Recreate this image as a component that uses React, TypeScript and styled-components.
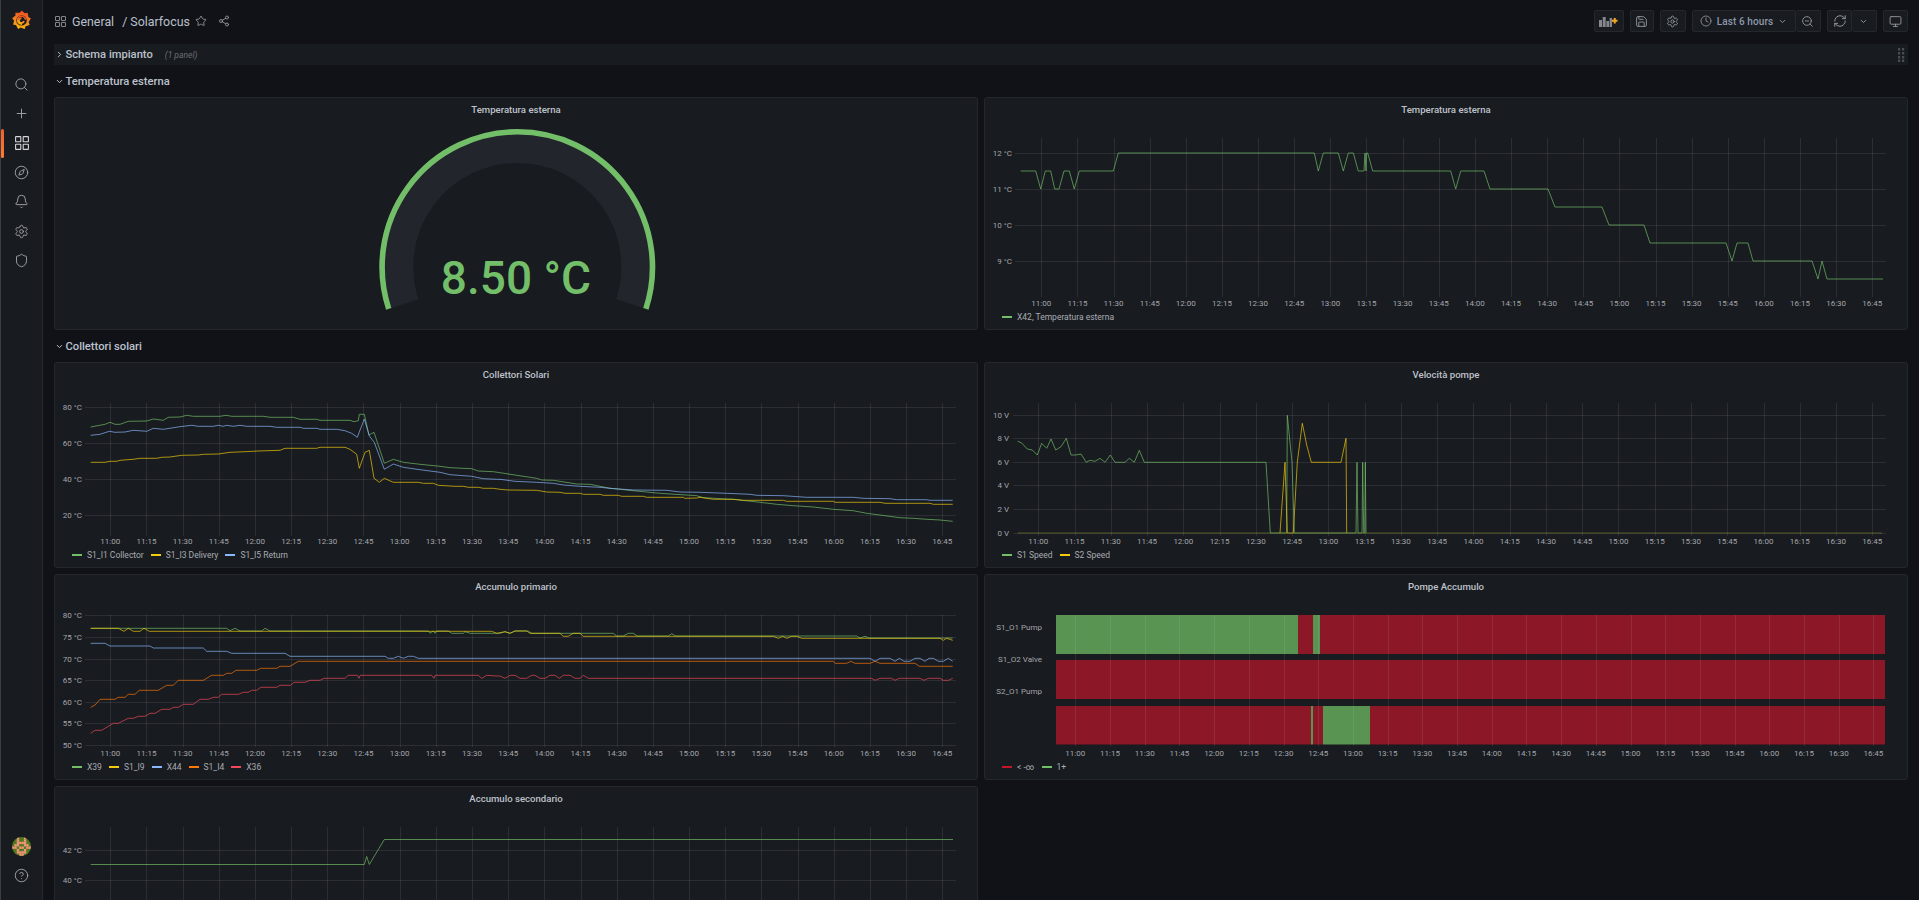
import React from "react";
import styled, { createGlobalStyle } from "styled-components";
import {
  Search,
  Plus,
  Compass,
  Bell,
  Settings,
  Shield,
  CircleHelp,
  Star,
  Share2,
  Save,
  Clock,
  ZoomOut,
  RefreshCw,
  Monitor,
  ChevronDown,
  ChevronRight,
} from "lucide-react";

const GREEN = "#73bf69";
const YELLOW = "#f2cc0c";
const BLUE = "#8ab8ff";
const ORANGE = "#ff780a";
const RED = "#f2495c";

const times = Array.from({ length: 24 }, (_, i) => {
  const m = 660 + i * 15;
  return `${Math.floor(m / 60)}:${String(m % 60).padStart(2, "0")}`;
});

// points are read off 3x crops, so they come in as crop pixels
const crop = (ox: number, oy: number, pts: number[]) => {
  const out: string[] = [];
  for (let i = 0; i < pts.length; i += 2) {
    out.push(`${(ox + pts[i] / 3).toFixed(1)},${(oy + pts[i + 1] / 3).toFixed(1)}`);
  }
  return out.join(" ");
};

interface Series {
  color: string;
  points: string;
}

interface ChartProps {
  left: number;
  top: number;
  width: number;
  height: number;
  tickStart: number;
  tickStep: number;
  tickTop: number;
  tickBottom: number;
  gridLeft: number;
  gridRight: number;
  yLabelX: number;
  xLabelY?: number;
  yTicks: [number, string][];
  series?: Series[];
  children?: React.ReactNode;
}

const GridLine = styled.line`
  stroke: rgba(204, 204, 220, 0.115);
  stroke-width: 1;
`;

const AxisText = styled.text`
  fill: #a4a6ac;
  font-size: 8px;
  font-family: Roboto, sans-serif;
`;

const PlotLine = styled.polyline`
  fill: none;
  stroke-width: 1;
  stroke-linejoin: round;
  opacity: 0.68;
`;

const ChartSvg = styled.svg`
  display: block;
  flex: 1;
  min-height: 0;
  width: 100%;
`;

const Chart = (p: ChartProps) => {
  const xs = times.map((_, i) => p.tickStart + i * p.tickStep);
  const { xLabelY } = p;
  return (
    <ChartSvg viewBox={`${p.left} ${p.top} ${p.width} ${p.height}`} preserveAspectRatio="xMinYMin">
      {p.children}
      {xs.map((x, i) => (
        <GridLine key={i} x1={Math.round(x) + 0.5} x2={Math.round(x) + 0.5} y1={p.tickTop} y2={p.tickBottom} />
      ))}
      {p.yTicks.map(([y, label]) => (
        <React.Fragment key={label}>
          <GridLine x1={p.gridLeft} x2={p.gridRight} y1={Math.round(y) + 0.5} y2={Math.round(y) + 0.5} />
          <AxisText x={p.yLabelX} y={y + 3} textAnchor="end">
            {label}
          </AxisText>
        </React.Fragment>
      ))}
      {xLabelY !== undefined &&
        xs.map((x, i) => (
          <AxisText key={i} x={x} y={xLabelY + 3} textAnchor="middle">
            {times[i]}
          </AxisText>
        ))}
      {p.series?.map((s, i) => <PlotLine key={i} stroke={s.color} points={s.points} />)}
    </ChartSvg>
  );
};

/* series */

const h = (v: number) => 153 + (12 - v) * 36;
const outsideTemp: Series = {
  color: GREEN,
  points:
    crop(980, 90, [
      122, 243, 167, 243, 182, 297, 196, 243, 212, 243, 224, 297, 237, 297, 252, 243, 268, 243, 283, 297, 298, 243,
      400, 243, 415, 189, 1003, 189, 1015, 243, 1030, 189, 1075, 189, 1090, 243, 1105, 189, 1120, 189, 1135, 243, 1152,
      243, 1155, 189, 1158, 243, 1160, 189, 1163, 189, 1178, 243, 1412, 243, 1427, 297, 1442, 243,
    ]) +
    " " +
    [
      [1484, 11.5],
      [1490, 11],
      [1548, 11],
      [1555, 10.5],
      [1602, 10.5],
      [1609, 10],
      [1644, 10],
      [1650, 9.5],
      [1726, 9.5],
      [1732, 9],
      [1737, 9.5],
      [1748, 9.5],
      [1753, 9],
      [1812, 9],
      [1818, 8.5],
      [1822, 9],
      [1827, 8.5],
      [1883, 8.5],
    ]
      .map(([x, v]) => `${x},${h(v)}`)
      .join(" "),
};

const collectors: Series[] = [
  {
    color: GREEN,
    points:
      crop(50, 355, [
        122, 216, 165, 208, 180, 202, 195, 208, 210, 208, 235, 199, 290, 198, 310, 192, 340, 196, 355, 187, 390, 186,
        410, 181, 430, 184, 510, 184, 528, 181, 545, 184, 640, 184, 660, 187, 730, 187, 750, 193, 800, 193, 810, 196,
        900, 196, 912, 200, 925, 197, 928, 178, 943, 178, 957, 240, 972, 232, 1003, 325, 1030, 313, 1060, 322, 1110,
        328, 1170, 334, 1200, 338, 1265, 341, 1285, 348, 1330, 350,
      ]) +
      " " +
      crop(500, 355, [
        0, 353, 50, 361, 110, 370, 125, 375, 160, 376, 230, 387, 270, 388, 330, 400, 430, 410, 480, 415, 590, 422, 610,
        428, 700, 433, 780, 442, 830, 448, 880, 452, 940, 456, 1000, 463, 1060, 467, 1100, 475, 1200, 488, 1240, 490,
        1280, 493, 1320, 495, 1358, 499,
      ]),
  },
  {
    color: YELLOW,
    points:
      crop(50, 355, [
        122, 322, 165, 322, 180, 319, 200, 319, 210, 316, 250, 313, 270, 310, 320, 310, 335, 307, 360, 306, 395, 301,
        445, 300, 460, 298, 505, 297, 540, 292, 585, 290, 625, 288, 690, 286, 705, 280, 800, 280, 810, 277, 885, 277,
        900, 283, 920, 298, 928, 340, 945, 292, 958, 286, 972, 370, 988, 382, 1003, 370, 1030, 382, 1105, 382, 1120,
        385, 1150, 385, 1165, 391, 1215, 394, 1240, 394, 1255, 397, 1285, 397, 1300, 400, 1330, 400,
      ]) +
      " " +
      crop(500, 355, [
        0, 403, 25, 405, 110, 406, 140, 411, 180, 412, 195, 415, 240, 415, 250, 418, 300, 418, 310, 421, 355, 421, 365,
        424, 430, 424, 440, 427, 550, 427, 555, 430, 590, 429, 600, 427, 640, 433, 700, 433, 730, 436, 850, 436, 860,
        439, 1000, 439, 1005, 442, 1140, 442, 1155, 445, 1290, 445, 1300, 448, 1358, 448,
      ]),
  },
  {
    color: BLUE,
    points:
      crop(50, 355, [
        122, 241, 150, 238, 178, 229, 195, 232, 225, 231, 250, 226, 290, 229, 310, 220, 340, 223, 390, 215, 425, 211,
        445, 214, 490, 214, 505, 211, 520, 214, 530, 211, 550, 214, 570, 211, 590, 214, 660, 214, 680, 217, 750, 217,
        760, 220, 800, 220, 810, 223, 860, 223, 885, 227, 905, 235, 922, 247, 943, 192, 958, 243, 973, 262, 1003, 343,
        1030, 327, 1060, 337, 1110, 344, 1170, 352, 1200, 359, 1265, 364, 1300, 371, 1340, 373,
      ]) +
      " " +
      crop(500, 355, [
        0, 373, 45, 379, 110, 382, 160, 385, 190, 390, 240, 394, 300, 397, 330, 400, 400, 405, 500, 406, 540, 411, 600,
        412, 680, 415, 750, 418, 770, 421, 850, 422, 920, 427, 1060, 427, 1090, 430, 1170, 431, 1190, 434, 1280, 434,
        1290, 436, 1358, 436,
      ]),
  },
];

// the flat zero stretch reads as a dim olive line where the two series overlap
const pumpSpeed: Series[] = [
  {
    color: GREEN,
    points: crop(985, 355, [
      98, 259, 110, 264, 127, 282, 142, 285, 157, 300, 170, 265, 185, 280, 198, 252, 212, 285, 228, 275, 244, 250, 258,
      300, 272, 300, 288, 297, 304, 322, 315, 316, 330, 319, 345, 310, 360, 322, 376, 300, 390, 322, 420, 322, 433, 310,
      448, 322, 463, 286, 478, 322, 843, 322, 856, 534, 905, 534, 907, 181, 921, 322, 928, 534, 1113, 534, 1116, 322,
      1119, 534, 1131, 534, 1133, 322, 1136, 534, 1139, 534, 1141, 322, 1143, 534,
    ]),
  },
  {
    color: YELLOW,
    points: crop(985, 355, [
      885, 534, 900, 322, 907, 534, 925, 534, 937, 322, 952, 205, 965, 270, 979, 322, 1068, 322, 1083, 250, 1085, 534,
    ]),
  },
  { color: "#727a2c", points: "1017.7,533 1882,533" },
];

const primary: Series[] = [
  {
    color: GREEN,
    points:
      crop(50, 575, [
        122, 160, 530, 160, 540, 167, 555, 160, 570, 168, 635, 168, 645, 160, 660, 168, 1135, 168, 1140, 175, 1150, 168,
        1155, 175, 1160, 168, 1195, 168, 1205, 175, 1240, 175, 1245, 170, 1260, 175, 1330, 175,
      ]) +
      " " +
      crop(500, 575, [
        0, 175, 15, 170, 30, 175, 45, 168, 85, 168, 95, 175, 340, 175, 350, 183, 370, 183, 385, 175, 400, 175, 412, 183,
        505, 183, 515, 176, 527, 183, 1070, 183, 1080, 189, 1095, 184, 1108, 189, 1358, 189,
      ]),
  },
  {
    color: YELLOW,
    points:
      crop(50, 575, [
        122, 160, 205, 160, 222, 169, 235, 160, 250, 169, 270, 169, 282, 160, 298, 169, 1325, 169, 1340, 175, 1365, 170,
        1380, 175, 1395, 168, 1430, 168, 1440, 175,
      ]) +
      " " +
      crop(500, 575, [
        180, 175, 190, 184, 205, 184, 220, 175, 240, 175, 250, 184, 820, 184, 835, 190, 848, 184, 860, 190, 875, 184,
        890, 184, 905, 190, 1320, 190, 1330, 196, 1340, 190, 1358, 196,
      ]),
  },
  {
    color: BLUE,
    points:
      crop(50, 575, [
        122, 205, 165, 205, 180, 213, 300, 213, 310, 219, 460, 219, 470, 229, 530, 229, 545, 235, 705, 235, 720, 244,
        1005, 244, 1015, 250, 1030, 250, 1045, 244, 1060, 250, 1075, 244, 1090, 244, 1105, 250,
      ]) +
      " " +
      crop(500, 575, [
        1110, 250, 1125, 259, 1140, 250, 1170, 250, 1185, 259, 1198, 250, 1212, 259, 1230, 259, 1245, 250, 1260, 250,
        1275, 259, 1287, 250, 1300, 250, 1315, 259, 1330, 259, 1345, 250, 1358, 259,
      ]),
  },
  {
    color: ORANGE,
    points:
      crop(50, 575, [
        122, 397, 135, 390, 150, 373, 195, 373, 205, 367, 225, 367, 235, 358, 255, 358, 268, 346, 325, 346, 350, 331,
        370, 331, 385, 316, 460, 316, 485, 301, 520, 301, 530, 295, 545, 295, 558, 286, 620, 286, 632, 280, 680, 280,
        690, 274, 720, 274, 745, 259,
      ]) +
      " " +
      crop(500, 575, [
        1000, 259, 1005, 265, 1040, 265, 1052, 259, 1065, 265, 1110, 265, 1125, 259, 1140, 265, 1245, 265, 1258, 274,
        1358, 274,
      ]),
  },
  {
    color: RED,
    points:
      crop(50, 575, [
        122, 475, 135, 466, 155, 466, 190, 445, 205, 445, 235, 430, 250, 430, 265, 424, 285, 424, 300, 415, 315, 415,
        335, 403, 360, 403, 370, 397, 385, 397, 400, 388, 430, 388, 450, 373, 475, 373, 490, 367, 505, 367, 515, 358,
        565, 358, 580, 352, 595, 352, 605, 346, 620, 346, 632, 337, 680, 337, 690, 331, 722, 331, 732, 322, 765, 322,
        780, 316, 810, 316, 822, 310, 885, 310, 895, 301, 922, 301, 927, 310, 930, 301, 1145, 301, 1152, 310, 1155, 301,
        1285, 301, 1295, 310, 1310, 301, 1340, 303,
      ]) +
      " " +
      crop(500, 575, [
        0, 303, 15, 310, 30, 301, 45, 301, 60, 310, 80, 310, 95, 301, 105, 301, 120, 310, 135, 310, 150, 301, 165, 301,
        178, 310, 190, 301, 210, 301, 225, 310, 240, 310, 250, 301, 265, 310, 1115, 310, 1125, 316, 1140, 310, 1175, 310,
        1185, 316, 1198, 310, 1260, 310, 1272, 316, 1285, 310, 1320, 310, 1330, 316, 1345, 316, 1358, 310,
      ]),
  },
];

const secondary: Series[] = [
  { color: GREEN, points: "90.7,864.5 364.3,864.5 366.7,856.5 369.3,864.5 384.3,839.5 953,839.5" },
];

/* pump state bars: [from x, to x, on] */
const pumpRows: { y: number; h: number; parts: [number, number, boolean][] }[] = [
  {
    y: 615,
    h: 39,
    parts: [
      [1056, 1298, true],
      [1298, 1313, false],
      [1313, 1320, true],
      [1320, 1885, false],
    ],
  },
  { y: 660, h: 39, parts: [[1056, 1885, false]] },
  {
    y: 706,
    h: 38.5,
    parts: [
      [1056, 1311, false],
      [1311, 1313, true],
      [1313, 1323, false],
      [1323, 1370, true],
      [1370, 1885, false],
    ],
  },
];

/* gauge */
const polar = (r: number, deg: number) => {
  const a = (deg * Math.PI) / 180;
  return `${(517.3 + r * Math.cos(a)).toFixed(2)} ${(267 - r * Math.sin(a)).toFixed(2)}`;
};
const arc = (r: number) => `M ${polar(r, 198)} A ${r} ${r} 0 1 1 ${polar(r, -18)}`;

/* logo teeth */
const logoTeeth = () => {
  const pts: string[] = [];
  for (let i = 0; i < 27; i++) {
    const a = (i / 27) * Math.PI * 2 - Math.PI / 2;
    const r = i % 3 === 0 ? 12 : i % 3 === 1 ? 10.4 : 9.4;
    pts.push(`${(12 + r * Math.cos(a)).toFixed(2)},${(12 + r * Math.sin(a)).toFixed(2)}`);
  }
  return pts.join(" ");
};

const avatarCells = [
  "..x..x..",
  "..x..x..",
  "..xxxx..",
  ".xx..xx.",
  "xx.xx.xx",
  "..x..x..",
  "..xxxx..",
  "...xx...",
];

/* styles */

const GlobalStyle = createGlobalStyle`
  html, body {
    margin: 0;
    height: 100%;
    background: #111217;
    overflow: hidden;
  }
  body {
    font-family: Roboto, "Liberation Sans", sans-serif;
    color: #ccccdc;
  }
  #root {
    height: 100%;
  }
`;

const Shell = styled.div`
  display: flex;
  height: 900px;
  overflow: hidden;
`;

const Sidebar = styled.nav`
  flex: 0 0 43px;
  box-sizing: border-box;
  display: flex;
  flex-direction: column;
  background: #181b1f;
  border-left: 1px solid #3c3d40;
  border-right: 1px solid #24272b;
  padding-bottom: 10px;
`;

const LogoBox = styled.div`
  height: 40px;
  margin-bottom: 30px;
  display: flex;
  align-items: center;
  justify-content: center;
`;

const NavItem = styled.div<{ $active?: boolean }>`
  position: relative;
  height: 29.3px;
  display: flex;
  align-items: center;
  justify-content: center;
  color: ${({ $active }) => ($active ? "#d3d4dc" : "#9a9ca3")};

  ${({ $active }) =>
    $active &&
    `
    &::before {
      content: "";
      position: absolute;
      left: 0;
      top: 0;
      bottom: 0;
      width: 3px;
      border-radius: 2px;
      background: linear-gradient(#f2602c, #ff7a33);
    }
  `}
`;

const Spacer = styled.div`
  flex: 1;
`;

const Main = styled.main`
  flex: 1;
  min-width: 0;
  display: flex;
  flex-direction: column;
`;

const Header = styled.header`
  flex: 0 0 44px;
  box-sizing: border-box;
  display: flex;
  align-items: center;
  justify-content: space-between;
  padding: 0 11px 2px;
`;

const Crumbs = styled.div`
  display: flex;
  align-items: center;
  color: #b9c0cc;
  font-size: 12.4px;
`;

const CrumbIcon = styled.span<{ $gap?: number }>`
  display: flex;
  color: #9a9ca3;
  margin-left: ${({ $gap }) => $gap ?? 0}px;
`;

const CrumbText = styled.span<{ $gap: number }>`
  margin-left: ${({ $gap }) => $gap}px;
`;

const Toolbar = styled.div`
  display: flex;
  gap: 6px;
`;

const ToolGroup = styled.div`
  display: flex;
`;

const ToolButton = styled.div<{ $w: number; $joined?: boolean }>`
  box-sizing: border-box;
  width: ${({ $w }) => $w}px;
  height: 21.5px;
  display: flex;
  align-items: center;
  justify-content: center;
  gap: 5px;
  background: #181b1f;
  border: 1px solid #24272b;
  border-left-width: ${({ $joined }) => ($joined ? 0 : 1)}px;
  border-radius: 2px;
  color: #9a9ca3;
`;

const TimeLabel = styled.span`
  font-size: 10px;
  font-weight: 500;
  color: #8c98ab;
  letter-spacing: 0.1px;
`;

const Content = styled.div`
  padding: 0 11px;
  flex: 1;
  min-height: 0;
`;

const RowBar = styled.div<{ $collapsed?: boolean }>`
  display: flex;
  align-items: center;
  height: ${({ $collapsed }) => ($collapsed ? 21 : 32)}px;
  background: ${({ $collapsed }) => ($collapsed ? "#181b1f" : "transparent")};
  font-size: 11.2px;
  font-weight: 500;
  color: #bcc2cd;
`;

const RowArrow = styled.span`
  flex: 0 0 11.5px;
  display: flex;
  justify-content: center;
  color: #b9c0cc;
`;

const PanelCount = styled.span`
  margin-left: 12px;
  font-size: 8.5px;
  font-style: italic;
  font-weight: 400;
  color: #6c6f76;
`;

const Grip = styled.svg`
  margin-left: auto;
  margin-right: 3px;
`;

const Grid = styled.div`
  display: grid;
  grid-template-columns: 1fr 1fr;
  column-gap: 6px;
`;

const PanelBox = styled.section<{ $h: number; $gapBelow?: number }>`
  box-sizing: border-box;
  height: ${({ $h }) => $h}px;
  margin-bottom: ${({ $gapBelow }) => $gapBelow ?? 0}px;
  display: flex;
  flex-direction: column;
  background: #181b1f;
  border: 1px solid #24272b;
  border-radius: 3px;
`;

const PanelTitle = styled.h2`
  flex: 0 0 24px;
  margin: 0;
  text-align: center;
  font-size: 9.6px;
  font-weight: 500;
  line-height: 23px;
  color: #bfc2cb;
`;

const Legend = styled.div`
  flex: 0 0 20px;
  box-sizing: border-box;
  display: flex;
  align-items: center;
  gap: 7px;
  padding: 0 0 4px 17px;
  font-size: 8.5px;
  color: #a9acb3;
`;

const LegendItem = styled.span`
  display: flex;
  align-items: center;
  gap: 5px;
`;

const LegendDash = styled.i<{ $color: string }>`
  display: block;
  width: 10px;
  height: 2px;
  background: ${({ $color }) => $color};
`;

const GaugeValue = styled.text`
  fill: #73bf69;
  font-size: 46px;
  font-weight: 500;
  font-family: Roboto, sans-serif;
`;

const GaugeArc = styled.path`
  fill: none;
`;

/* small parts */

const DashIcon = ({ size }: { size: number }) => (
  <svg width={size} height={size} viewBox="0 0 14 14" fill="none" stroke="currentColor" strokeWidth="1.1">
    <rect x="0.6" y="0.6" width="5.2" height="5.2" rx="0.4" />
    <rect x="8.2" y="0.6" width="5.2" height="5.2" rx="0.4" />
    <rect x="0.6" y="8.2" width="5.2" height="5.2" rx="0.4" />
    <rect x="8.2" y="8.2" width="5.2" height="5.2" rx="0.4" />
  </svg>
);

const GrafanaLogo = () => (
  <svg width="19" height="20" viewBox="0 0 24 24">
    <defs>
      <linearGradient id="logoGrad" x1="0.6" y1="0" x2="0.4" y2="1">
        <stop offset="0" stopColor="#ef4a22" />
        <stop offset="0.6" stopColor="#f58a1f" />
        <stop offset="1" stopColor="#fbb40a" />
      </linearGradient>
    </defs>
    <polygon points={logoTeeth()} fill="url(#logoGrad)" />
    <circle cx="12" cy="12.5" r="6.6" fill="#181b1f" />
    <path
      d="M17 11.5 A5 5 0 1 0 12.5 17.2 M15 13 A3 3 0 1 1 12 9.6"
      fill="none"
      stroke="url(#logoGrad)"
      strokeWidth="2"
    />
  </svg>
);

const Avatar = () => (
  <svg width="19" height="19" viewBox="0 0 8 8">
    <defs>
      <clipPath id="avatarClip">
        <circle cx="4" cy="4" r="4" />
      </clipPath>
    </defs>
    <g clipPath="url(#avatarClip)">
      <rect width="8" height="8" fill="#4f7a1c" />
      {avatarCells.map((row, y) =>
        row.split("").map((c, x) => (c === "x" ? <rect key={`${x}-${y}`} x={x} y={y} width="1" height="1" fill="#f2937c" /> : null)),
      )}
    </g>
  </svg>
);

const AddPanelIcon = () => (
  <svg width="19" height="11" viewBox="0 0 19 11">
    <g fill="#85878d">
      <rect x="0" y="4" width="3" height="7" />
      <rect x="3.7" y="1" width="3" height="10" />
      <rect x="7.4" y="5" width="2.6" height="6" />
      <rect x="10.6" y="2" width="2.4" height="9" />
    </g>
    <path d="M13 4.8h5.5M15.75 2v5.6" stroke="#f5a623" strokeWidth="2" fill="none" />
  </svg>
);

const GripIcon = () => (
  <Grip width="7" height="14" viewBox="0 0 7 14">
    {[0, 4].map((x) =>
      [0, 4, 8, 11.5].map((y) => <rect key={`${x}-${y}`} x={x} y={y} width="2.2" height="2.5" fill="#4a4d52" />),
    )}
  </Grip>
);

interface LegendEntry {
  color: string;
  label: string;
}

const Panel = ({
  title,
  height,
  gapBelow,
  legend,
  children,
}: {
  title: string;
  height: number;
  gapBelow?: number;
  legend?: LegendEntry[];
  children: React.ReactNode;
}) => (
  <PanelBox $h={height} $gapBelow={gapBelow}>
    <PanelTitle>{title}</PanelTitle>
    {children}
    {legend && (
      <Legend>
        {legend.map((l) => (
          <LegendItem key={l.label}>
            <LegendDash $color={l.color} />
            {l.label}
          </LegendItem>
        ))}
      </Legend>
    )}
  </PanelBox>
);

const sideIcon = { size: 15, strokeWidth: 1.6 };
const toolIcon = { size: 13, strokeWidth: 1.6 };

const App = () => {
  return (
    <Shell>
      <GlobalStyle />
      <Sidebar>
        <LogoBox>
          <GrafanaLogo />
        </LogoBox>
        <NavItem>
          <Search {...sideIcon} />
        </NavItem>
        <NavItem>
          <Plus {...sideIcon} />
        </NavItem>
        <NavItem $active>
          <DashIcon size={14} />
        </NavItem>
        <NavItem>
          <Compass {...sideIcon} />
        </NavItem>
        <NavItem>
          <Bell {...sideIcon} />
        </NavItem>
        <NavItem>
          <Settings {...sideIcon} />
        </NavItem>
        <NavItem>
          <Shield {...sideIcon} />
        </NavItem>
        <Spacer />
        <NavItem>
          <Avatar />
        </NavItem>
        <NavItem>
          <CircleHelp {...sideIcon} />
        </NavItem>
      </Sidebar>
      <Main>
        <Header>
          <Crumbs>
            <CrumbIcon $gap={1}>
              <DashIcon size={11} />
            </CrumbIcon>
            <CrumbText $gap={6}>General</CrumbText>
            <CrumbText $gap={8}>/ Solarfocus</CrumbText>
            <CrumbIcon $gap={5}>
              <Star size={12} strokeWidth={1.7} />
            </CrumbIcon>
            <CrumbIcon $gap={11}>
              <Share2 size={12} strokeWidth={1.7} />
            </CrumbIcon>
          </Crumbs>
          <Toolbar>
            <ToolButton $w={29.5}>
              <AddPanelIcon />
            </ToolButton>
            <ToolButton $w={24.5}>
              <Save {...toolIcon} />
            </ToolButton>
            <ToolButton $w={25.5}>
              <Settings {...toolIcon} />
            </ToolButton>
            <ToolGroup>
              <ToolButton $w={104}>
                <Clock size={12} strokeWidth={1.6} />
                <TimeLabel>Last 6 hours</TimeLabel>
                <ChevronDown size={9} strokeWidth={2.4} />
              </ToolButton>
              <ToolButton $w={25.5} $joined>
                <ZoomOut {...toolIcon} />
              </ToolButton>
            </ToolGroup>
            <ToolGroup>
              <ToolButton $w={25}>
                <RefreshCw size={14} strokeWidth={1.6} />
              </ToolButton>
              <ToolButton $w={24.5} $joined>
                <ChevronDown size={9} strokeWidth={2.4} />
              </ToolButton>
            </ToolGroup>
            <ToolButton $w={25.5}>
              <Monitor {...toolIcon} />
            </ToolButton>
          </Toolbar>
        </Header>
        <Content>
          <RowBar $collapsed>
            <RowArrow>
              <ChevronRight size={9} strokeWidth={2.6} />
            </RowArrow>
            Schema impianto
            <PanelCount>(1 panel)</PanelCount>
            <GripIcon />
          </RowBar>
          <RowBar>
            <RowArrow>
              <ChevronDown size={9} strokeWidth={2.6} />
            </RowArrow>
            Temperatura esterna
          </RowBar>
          <Grid>
            <Panel title="Temperatura esterna" height={233}>
              <ChartSvg viewBox="55 122 922 207" preserveAspectRatio="xMinYMin">
                <GaugeArc d={arc(121)} stroke="#22252b" strokeWidth="34" />
                <GaugeArc d={arc(135.2)} stroke="#73bf69" strokeWidth="5.6" />
                <GaugeValue x="516" y="293.7" textAnchor="middle">
                  8.50 °C
                </GaugeValue>
              </ChartSvg>
            </Panel>
            <Panel
              title="Temperatura esterna"
              height={233}
              legend={[{ color: GREEN, label: "X42, Temperatura esterna" }]}
            >
              <Chart
                left={985}
                top={122}
                width={922}
                height={187}
                tickStart={1041.3}
                tickStep={36.13}
                tickTop={138}
                tickBottom={297}
                gridLeft={1015}
                gridRight={1886}
                yLabelX={1012}
                xLabelY={303}
                yTicks={[
                  [153, "12 °C"],
                  [189, "11 °C"],
                  [225, "10 °C"],
                  [261, "9 °C"],
                ]}
                series={[outsideTemp]}
              />
            </Panel>
          </Grid>
          <RowBar>
            <RowArrow>
              <ChevronDown size={9} strokeWidth={2.6} />
            </RowArrow>
            Collettori solari
          </RowBar>
          <Grid>
            <Panel
              title="Collettori Solari"
              height={206}
              gapBelow={6}
              legend={[
                { color: GREEN, label: "S1_I1 Collector" },
                { color: YELLOW, label: "S1_I3 Delivery" },
                { color: BLUE, label: "S1_I5 Return" },
              ]}
            >
              <Chart
                left={55}
                top={387}
                width={922}
                height={160}
                tickStart={110.3}
                tickStep={36.17}
                tickTop={403}
                tickBottom={536}
                gridLeft={85}
                gridRight={956}
                yLabelX={82}
                xLabelY={541}
                yTicks={[
                  [407.3, "80 °C"],
                  [443.3, "60 °C"],
                  [479.3, "40 °C"],
                  [515.3, "20 °C"],
                ]}
                series={collectors}
              />
            </Panel>
            <Panel
              title="Velocità pompe"
              height={206}
              gapBelow={6}
              legend={[
                { color: GREEN, label: "S1 Speed" },
                { color: YELLOW, label: "S2 Speed" },
              ]}
            >
              <Chart
                left={985}
                top={387}
                width={922}
                height={160}
                tickStart={1038.3}
                tickStep={36.26}
                tickTop={403}
                tickBottom={536}
                gridLeft={1013}
                gridRight={1886}
                yLabelX={1009}
                xLabelY={541}
                yTicks={[
                  [415.3, "10 V"],
                  [438.3, "8 V"],
                  [462.3, "6 V"],
                  [485.3, "4 V"],
                  [509.3, "2 V"],
                  [533, "0 V"],
                ]}
                series={pumpSpeed}
              />
            </Panel>
            <Panel
              title="Accumulo primario"
              height={206}
              gapBelow={6}
              legend={[
                { color: GREEN, label: "X39" },
                { color: YELLOW, label: "S1_I9" },
                { color: BLUE, label: "X44" },
                { color: ORANGE, label: "S1_I4" },
                { color: RED, label: "X36" },
              ]}
            >
              <Chart
                left={55}
                top={599}
                width={922}
                height={160}
                tickStart={110.3}
                tickStep={36.17}
                tickTop={615}
                tickBottom={747}
                gridLeft={85}
                gridRight={956}
                yLabelX={82}
                xLabelY={753}
                yTicks={[
                  [615.3, "80 °C"],
                  [637.3, "75 °C"],
                  [659, "70 °C"],
                  [680.3, "65 °C"],
                  [701.7, "60 °C"],
                  [723.3, "55 °C"],
                  [745.3, "50 °C"],
                ]}
                series={primary}
              />
            </Panel>
            <Panel
              title="Pompe Accumulo"
              height={206}
              gapBelow={6}
              legend={[
                { color: "#c4162a", label: "< -∞" },
                { color: GREEN, label: "1+" },
              ]}
            >
              <Chart
                left={985}
                top={599}
                width={922}
                height={160}
                tickStart={1075.3}
                tickStep={34.7}
                tickTop={615}
                tickBottom={746}
                gridLeft={1056}
                gridRight={1056}
                yLabelX={1042}
                xLabelY={753}
                yTicks={[]}
              >
                {pumpRows.map((row) =>
                  row.parts.map(([from, to, on]) => (
                    <rect
                      key={`${row.y}-${from}`}
                      x={from}
                      y={row.y}
                      width={to - from}
                      height={row.h}
                      fill={on ? "#5a9452" : "#8c1726"}
                    />
                  )),
                )}
                <AxisText x={1042} y={630} textAnchor="end">
                  S1_O1 Pump
                </AxisText>
                <AxisText x={1042} y={662} textAnchor="end">
                  S1_O2 Valve
                </AxisText>
                <AxisText x={1042} y={694} textAnchor="end">
                  S2_O1 Pump
                </AxisText>
              </Chart>
            </Panel>
            <Panel title="Accumulo secondario" height={206}>
              <Chart
                left={55}
                top={811}
                width={922}
                height={180}
                tickStart={110.3}
                tickStep={36.17}
                tickTop={827}
                tickBottom={960}
                gridLeft={85}
                gridRight={956}
                yLabelX={82}
                yTicks={[
                  [850, "42 °C"],
                  [880, "40 °C"],
                ]}
                series={secondary}
              />
            </Panel>
          </Grid>
        </Content>
      </Main>
    </Shell>
  );
};

export default App;
